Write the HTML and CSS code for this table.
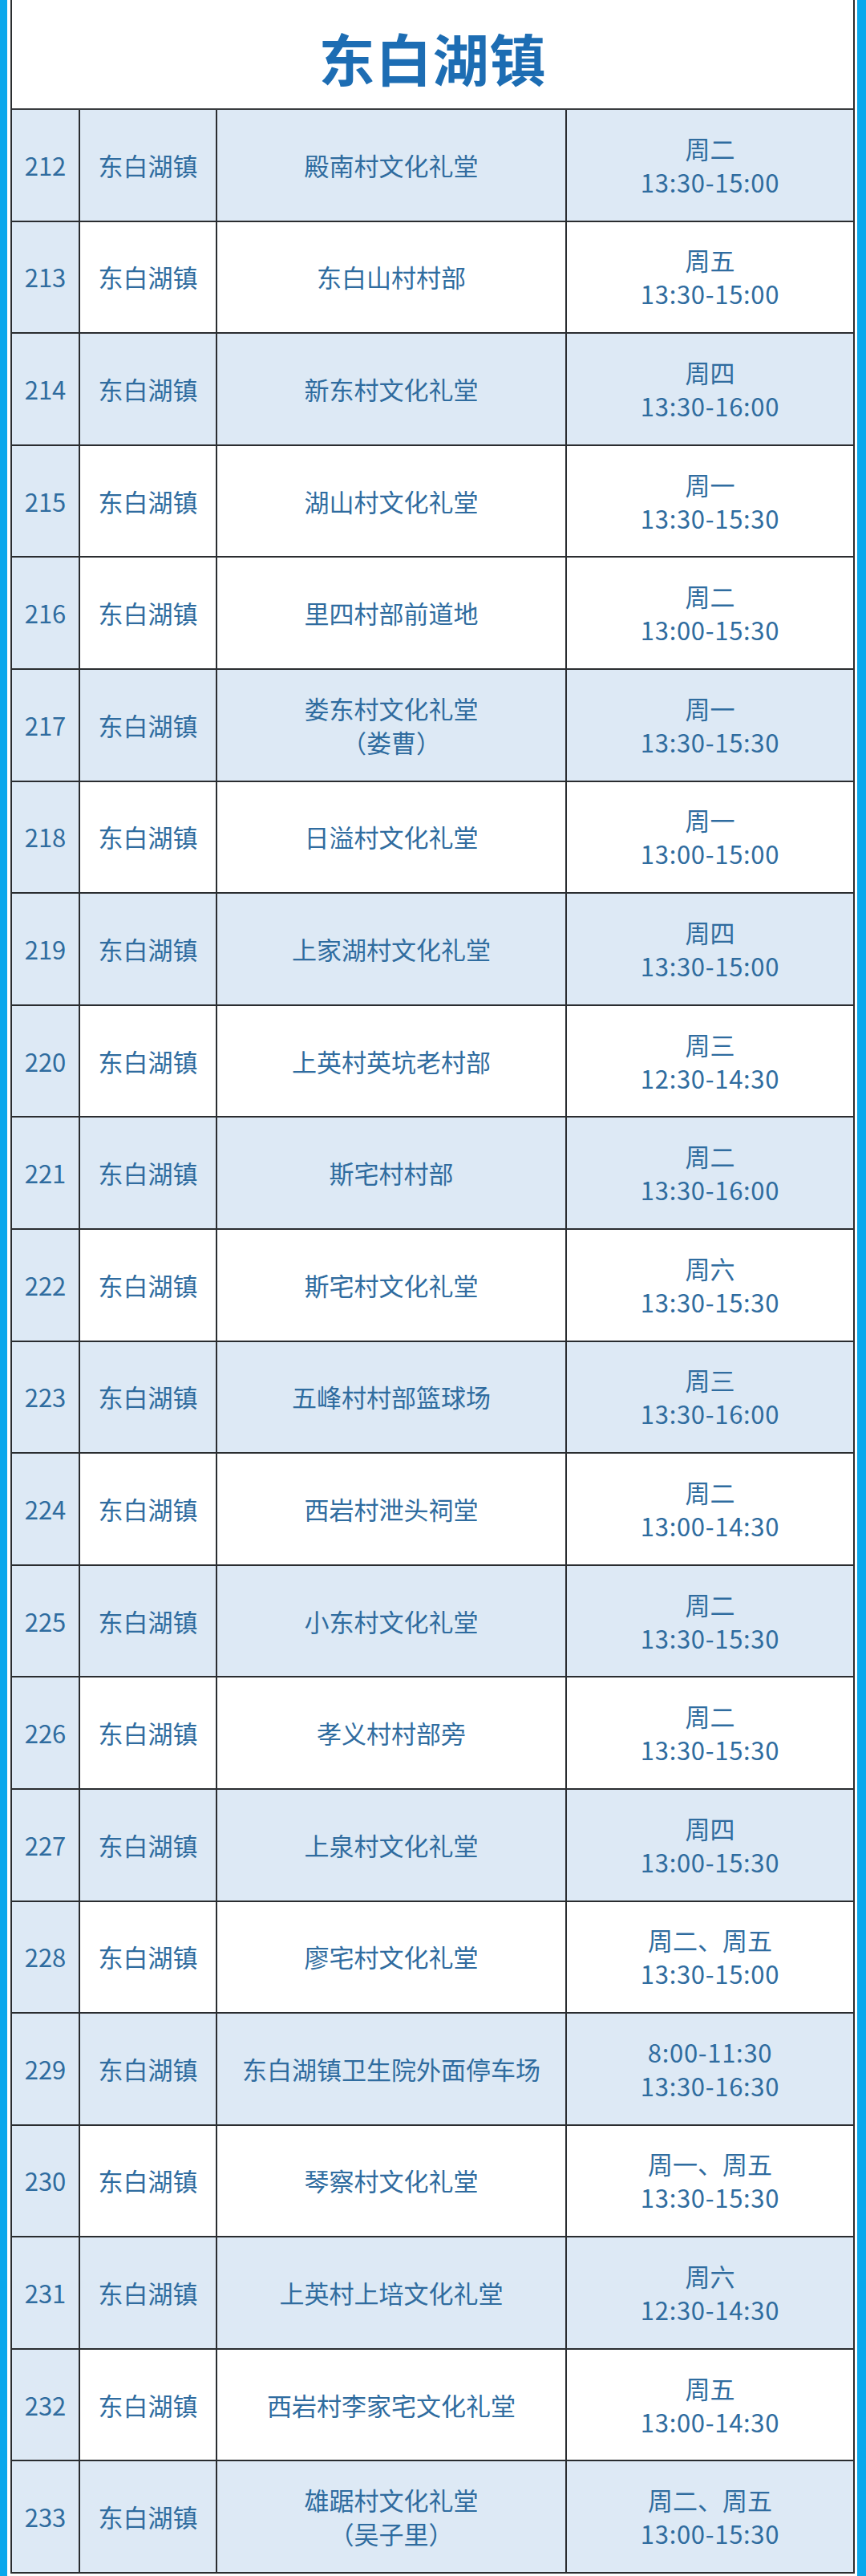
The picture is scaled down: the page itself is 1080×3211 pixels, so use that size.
FILE: index.html
```html
<!DOCTYPE html>
<html lang="zh-CN">
<head>
<meta charset="utf-8">
<title>东白湖镇</title>
<link rel="stylesheet" href="styles.css">
</head>
<body>
<div class="page">
  <div class="inner">
    <div class="frame">
      <div class="header"><h1 class="title">东白湖镇</h1></div>
      <div class="row shade"><div class="c num">212</div><div class="c">东白湖镇</div><div class="c">殿南村文化礼堂</div><div class="c"><span>周二</span><span class="t">13:30-15:00</span></div></div>
      <div class="row"><div class="c num">213</div><div class="c">东白湖镇</div><div class="c">东白山村村部</div><div class="c"><span>周五</span><span class="t">13:30-15:00</span></div></div>
      <div class="row shade"><div class="c num">214</div><div class="c">东白湖镇</div><div class="c">新东村文化礼堂</div><div class="c"><span>周四</span><span class="t">13:30-16:00</span></div></div>
      <div class="row"><div class="c num">215</div><div class="c">东白湖镇</div><div class="c">湖山村文化礼堂</div><div class="c"><span>周一</span><span class="t">13:30-15:30</span></div></div>
      <div class="row"><div class="c num">216</div><div class="c">东白湖镇</div><div class="c">里四村部前道地</div><div class="c"><span>周二</span><span class="t">13:00-15:30</span></div></div>
      <div class="row shade"><div class="c num">217</div><div class="c">东白湖镇</div><div class="c"><span>娄东村文化礼堂</span><span>（娄曹）</span></div><div class="c"><span>周一</span><span class="t">13:30-15:30</span></div></div>
      <div class="row"><div class="c num">218</div><div class="c">东白湖镇</div><div class="c">日溢村文化礼堂</div><div class="c"><span>周一</span><span class="t">13:00-15:00</span></div></div>
      <div class="row shade"><div class="c num">219</div><div class="c">东白湖镇</div><div class="c">上家湖村文化礼堂</div><div class="c"><span>周四</span><span class="t">13:30-15:00</span></div></div>
      <div class="row"><div class="c num">220</div><div class="c">东白湖镇</div><div class="c">上英村英坑老村部</div><div class="c"><span>周三</span><span class="t">12:30-14:30</span></div></div>
      <div class="row shade"><div class="c num">221</div><div class="c">东白湖镇</div><div class="c">斯宅村村部</div><div class="c"><span>周二</span><span class="t">13:30-16:00</span></div></div>
      <div class="row"><div class="c num">222</div><div class="c">东白湖镇</div><div class="c">斯宅村文化礼堂</div><div class="c"><span>周六</span><span class="t">13:30-15:30</span></div></div>
      <div class="row shade"><div class="c num">223</div><div class="c">东白湖镇</div><div class="c">五峰村村部篮球场</div><div class="c"><span>周三</span><span class="t">13:30-16:00</span></div></div>
      <div class="row"><div class="c num">224</div><div class="c">东白湖镇</div><div class="c">西岩村泄头祠堂</div><div class="c"><span>周二</span><span class="t">13:00-14:30</span></div></div>
      <div class="row shade"><div class="c num">225</div><div class="c">东白湖镇</div><div class="c">小东村文化礼堂</div><div class="c"><span>周二</span><span class="t">13:30-15:30</span></div></div>
      <div class="row"><div class="c num">226</div><div class="c">东白湖镇</div><div class="c">孝义村村部旁</div><div class="c"><span>周二</span><span class="t">13:30-15:30</span></div></div>
      <div class="row shade"><div class="c num">227</div><div class="c">东白湖镇</div><div class="c">上泉村文化礼堂</div><div class="c"><span>周四</span><span class="t">13:00-15:30</span></div></div>
      <div class="row"><div class="c num">228</div><div class="c">东白湖镇</div><div class="c">廖宅村文化礼堂</div><div class="c"><span>周二、周五</span><span class="t">13:30-15:00</span></div></div>
      <div class="row shade"><div class="c num">229</div><div class="c">东白湖镇</div><div class="c">东白湖镇卫生院外面停车场</div><div class="c"><span class="t">8:00-11:30</span><span class="t">13:30-16:30</span></div></div>
      <div class="row"><div class="c num">230</div><div class="c">东白湖镇</div><div class="c">琴察村文化礼堂</div><div class="c"><span>周一、周五</span><span class="t">13:30-15:30</span></div></div>
      <div class="row shade"><div class="c num">231</div><div class="c">东白湖镇</div><div class="c">上英村上培文化礼堂</div><div class="c"><span>周六</span><span class="t">12:30-14:30</span></div></div>
      <div class="row"><div class="c num">232</div><div class="c">东白湖镇</div><div class="c">西岩村李家宅文化礼堂</div><div class="c"><span>周五</span><span class="t">13:00-14:30</span></div></div>
      <div class="row shade"><div class="c num">233</div><div class="c">东白湖镇</div><div class="c"><span>雄踞村文化礼堂</span><span>（吴子里）</span></div><div class="c"><span>周二、周五</span><span class="t">13:00-15:30</span></div></div>
    </div>
  </div>
</div>
</body>
</html>
```

FILE: styles.css
```css
html, body {
  margin: 0;
  padding: 0;
  background: #ffffff;
}
.page {
  width: 1080px;
  height: 3211px;
  box-sizing: border-box;
  background: #0aa8ec;
  padding: 0 11px 0 9px;
}
.inner {
  height: 100%;
  background: #ffffff;
  padding: 0 3px 0 4px;
}
.frame {
  border-left: 2px solid #2a2d30;
  border-right: 2px solid #2a2d30;
  font-family: "Noto Sans CJK SC", "Noto Sans", sans-serif;
  color: #2f6c9f;
  font-size: 31px;
}
.header {
  height: 135px;
  border-bottom: 2px solid #3a3d40;
  display: flex;
  align-items: center;
  justify-content: center;
}
.title {
  margin: 0;
  padding-top: 8px;
  font-size: 70px;
  font-weight: 700;
  color: #1d6db3;
  letter-spacing: 1px;
}
.row {
  display: grid;
  grid-template-columns: 85px 171px 436px 1fr;
  height: 139.6px;
  box-sizing: border-box;
  border-bottom: 2px solid #2a2d30;
  background: #ffffff;
}
.row.shade {
  background: #dde9f5;
}
.c {
  box-sizing: border-box;
  border-right: 2px solid #2a2d30;
  display: flex;
  flex-direction: column;
  align-items: center;
  justify-content: center;
  line-height: 42px;
  text-align: center;
  white-space: nowrap;
}
.c:last-child {
  border-right: none;
}
.num {
  background: #dde9f5;
}
.t {
  letter-spacing: 0.7px;
}
```
